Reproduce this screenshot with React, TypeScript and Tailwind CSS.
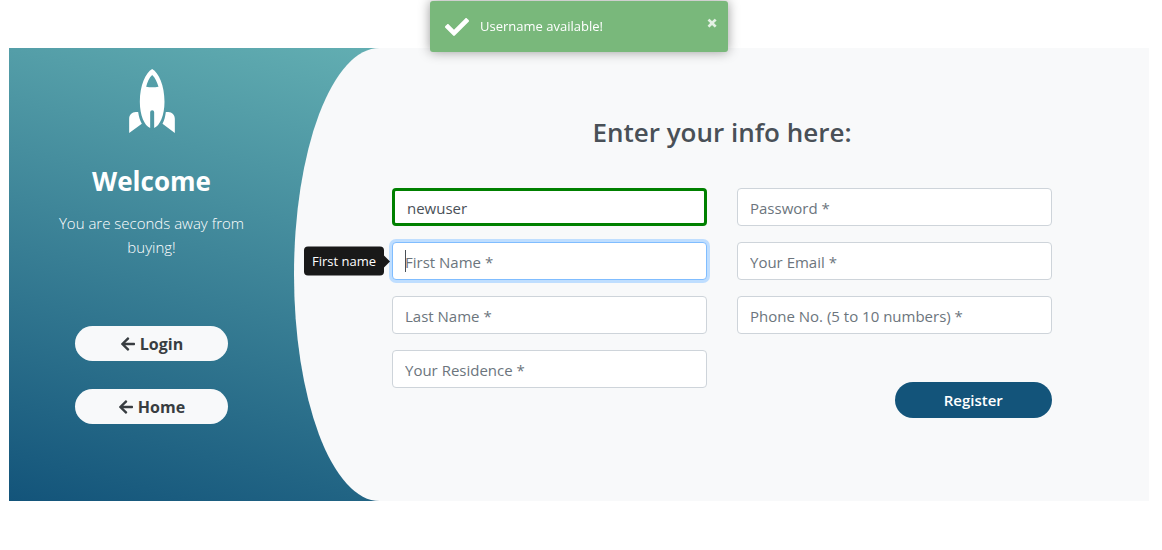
import type { ReactNode } from "react";
import { FaArrowLeft, FaCheck } from "react-icons/fa";

function RocketIcon() {
  return (
    <svg viewBox="0 0 137 192" className="h-16 w-[46px]" fill="currentColor" aria-hidden="true">
      <path
        fillRule="evenodd"
        d="M69 0C49 11 32 50 32 98c0 41 14 72 31 79v-47a6 6 0 0 1 12 0v47c17-7 31-38 31-79C106 50 89 11 69 0ZM69 18C60 26 54 40 51 53q18 4 37 0C84 40 78 26 69 18Z"
      />
      <path d="M27 129h-7C8 130 0 137 0 149v43l38-28c-6-10-9-22-11-35Z" />
      <path d="M110 129h7c12 1 20 8 20 20v43l-37-28c6-10 8-22 10-35Z" />
    </svg>
  );
}

function SideLink({ href, children }: { href: string; children: ReactNode }) {
  return (
    <a
      href={href}
      className="flex h-[35px] w-[153px] items-center justify-center gap-1 rounded-3xl bg-[#f8f9fa] text-base font-bold text-[#383d41]"
    >
      <FaArrowLeft className="size-4" aria-hidden="true" />
      {children}
    </a>
  );
}

type FieldProps = {
  id: string;
  label: string;
  type?: string;
  value?: string;
  state?: "valid" | "focused";
};

const borders = {
  plain: "border border-[#ced4da]",
  valid: "border-3 border-[#008000]",
  focused: "border border-[#80bdff] shadow-[0_0_0_3px_#bfdeff] caret-transparent",
};

function Field({ id, label, type = "text", value, state }: FieldProps) {
  return (
    <div className="relative">
      <input
        id={id}
        type={type}
        aria-label={label}
        defaultValue={value}
        placeholder={`${label} *`}
        className={`block h-[38px] w-full rounded bg-white px-3 pt-0.5 text-[15px] text-[#495057] outline-none placeholder:text-[#6c757d] ${borders[state ?? "plain"]}`}
      />
      {state === "focused" && (
        <>
          <span className="absolute left-[13px] top-2 h-[22px] w-px bg-[#495057]" />
          <div
            role="tooltip"
            className="absolute right-full top-1/2 mr-2 -translate-y-1/2 rounded bg-[#191919] px-2 py-1 text-[13px] leading-[21px] whitespace-nowrap text-white"
          >
            First name
            <span className="absolute left-full top-1/2 -translate-y-1/2 border-y-[6px] border-l-[6px] border-y-transparent border-l-[#191919]" />
          </div>
        </>
      )}
    </div>
  );
}

export default function App() {
  return (
    <div className="min-h-screen bg-white pt-12 pr-[13px] pl-[9px] font-['Open_Sans','Noto_Sans',sans-serif]">
      <div className="fixed inset-x-0 top-px z-10 flex justify-center pr-[13px] pl-[9px]">
        <div
          role="status"
          className="flex h-[51px] w-[298px] items-center rounded-[3px] bg-[#79b87b] pl-[15px] text-white shadow-[0_0_12px_#999]"
        >
          <FaCheck className="size-6" aria-hidden="true" />
          <span className="ml-[11px] grow text-[13px]">Username available!</span>
          <button type="button" aria-label="Close" className="mr-2.5 mb-2 text-xl leading-5 font-extrabold text-white/80">
            ×
          </button>
        </div>
      </div>

      <main className="flex bg-[linear-gradient(15deg,#13547a_0%,#80d0c7_100%)]">
        <aside className="flex w-1/4 flex-col items-center pt-[21px] pb-[77px] text-white">
          <RocketIcon />
          <h3 className="mt-[31px] text-[26px] leading-[34px] font-bold">Welcome</h3>
          <p className="mt-[13px] px-10 text-center text-[15px] leading-6 font-light">
            You are seconds away from buying!
          </p>
          <nav className="mt-[67px] flex flex-col gap-7">
            <SideLink href="#login">Login</SideLink>
            <SideLink href="#home">Home</SideLink>
          </nav>
        </aside>

        <section className="w-3/4 rounded-l-[10%_50%] bg-[#f8f9fa] pt-[67px] pr-[97px] pl-[98px]">
          <h3 className="text-center text-[26px] leading-[34px] font-semibold text-[#495057]">
            Enter your info here:
          </h3>
          <form className="mt-[39px] grid grid-cols-2 gap-x-[30px]">
            <div className="flex flex-col gap-4">
              <Field id="username" label="Username" value="newuser" state="valid" />
              <Field id="first-name" label="First Name" state="focused" />
              <Field id="last-name" label="Last Name" />
              <Field id="residence" label="Your Residence" />
            </div>
            <div className="flex flex-col gap-4">
              <Field id="password" label="Password" type="password" />
              <Field id="email" label="Your Email" type="email" />
              <Field id="phone" label="Phone No. (5 to 10 numbers)" type="tel" />
              <button
                type="button"
                className="mt-8 h-9 w-1/2 self-end rounded-3xl bg-[#13547a] text-[15px] font-semibold text-white"
              >
                Register
              </button>
            </div>
          </form>
        </section>
      </main>
    </div>
  );
}
